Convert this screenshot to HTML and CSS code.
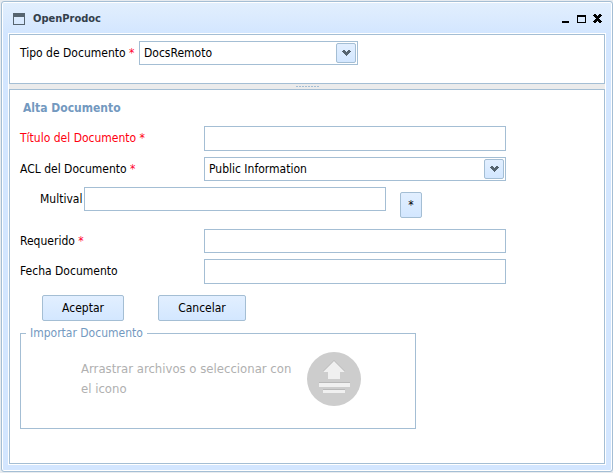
FILE: index.html
```html
<!DOCTYPE html>
<html lang="es">
<head>
<meta charset="utf-8">
<title>OpenProdoc</title>
<link rel="stylesheet" href="styles.css">
</head>
<body>
<main class="window">
  <header class="titlebar">
    <svg class="app-icon" width="12" height="12" viewBox="0 0 12 12" aria-hidden="true"><path fill="#56646f" fill-rule="evenodd" d="M0 0h12v12H0zM1 4v7h10V4z"/></svg>
    <h1 class="title">OpenProdoc</h1>
    <button class="tool" aria-label="Minimizar"><svg width="9" height="9" viewBox="0 0 9 9"><path d="M1 7h7v2H1z"/></svg></button>
    <button class="tool" aria-label="Maximizar"><svg width="9" height="9" viewBox="0 0 9 9"><path fill-rule="evenodd" d="M0 1h9v8H0zM1 3v5h7V3z"/></svg></button>
    <button class="tool" aria-label="Cerrar"><svg width="9" height="9" viewBox="0 0 9 9" shape-rendering="crispEdges"><path d="M1 0h2v1h1v1h1V1h1V0h2v1h1v1H8v1H7v1H6v1h1v1h1v1h1v1H8v1H6V8H5V7H4v1H3v1H1V8H0V7h1V6h1V5h1V4H2V3H1V2H0V1h1z"/></svg></button>
  </header>
  <div class="content">
    <section class="panel type-panel">
      <div class="type-row">
        <label for="type">Tipo de Documento <span class="required">*</span></label>
        <span class="combo">
          <select id="type" class="field"><option>DocsRemoto</option></select>
          <span class="combo-arrow"><svg width="9" height="6" viewBox="0 0 9 6" shape-rendering="crispEdges"><path fill="#56646f" d="M1 0h2v1h1v1h1V1h1V0h2v1h1v1H8v1H7v1H6v1H5v1H4V5H3V4H2V3H1V2H0V1h1z"/></svg></span>
        </span>
      </div>
    </section>
    <div class="splitter"><span class="grip"></span></div>
    <section class="panel form-panel">
      <h2 class="heading">Alta Documento</h2>
      <form class="form">
        <div class="row invalid">
          <label for="name">Título del Documento <span class="required">*</span></label>
          <input id="name" class="field tall" type="text">
        </div>
        <div class="row">
          <label for="acl">ACL del Documento <span class="required">*</span></label>
          <span class="combo">
            <select id="acl" class="field"><option>Public Information</option></select>
            <span class="combo-arrow"><svg width="9" height="6" viewBox="0 0 9 6" shape-rendering="crispEdges"><path fill="#56646f" d="M1 0h2v1h1v1h1V1h1V0h2v1h1v1H8v1H7v1H6v1H5v1H4V5H3V4H2V3H1V2H0V1h1z"/></svg></span>
          </span>
        </div>
        <div class="row multi">
          <label for="multival">Multival</label>
          <input id="multival" class="field" type="text">
          <button class="button star" type="button">*</button>
        </div>
        <div class="row">
          <label for="req">Requerido <span class="required">*</span></label>
          <input id="req" class="field" type="text">
        </div>
        <div class="row">
          <label for="date">Fecha Documento</label>
          <input id="date" class="field tall" type="text">
        </div>
        <div class="actions">
          <button class="button" type="button">Aceptar</button>
          <button class="button cancel" type="button">Cancelar</button>
        </div>
        <fieldset class="import">
          <legend>Importar Documento</legend>
          <div class="drop">
            <p class="hint">Arrastrar archivos o seleccionar con el icono</p>
            <svg width="54" height="54" viewBox="0 0 54 54" role="img" aria-label="Subir archivo">
              <circle cx="27" cy="27" r="27" fill="#cdcdcd"/>
              <path fill="#b8b8b8" d="M27 8l11 11v1H16v-1zM12 30h31v1H12zM16 37h22v1H16z"/>
              <path fill="#f0f0f0" d="M27 9l11 11h-5v7H21v-7h-5zM12 31h31v4H12zM16 38h22v3H16z"/>
            </svg>
          </div>
        </fieldset>
      </form>
    </section>
  </div>
</main>
</body>
</html>
```
FILE: styles.css
```css
* {
  box-sizing: border-box;
}

body {
  margin: 0;
  padding: 1px 0 1px 1px;
  height: 100vh;
  background: #e7ebef;
  color: #000;
  font: 12px/16px "DejaVu Sans Condensed", Tahoma, sans-serif;
}

.window {
  display: flex;
  flex-direction: column;
  height: 100%;
  padding: 0 6px 6px;
  border: 1px solid #a4bed4;
  border-radius: 3px;
  background: linear-gradient(#e2effd, #d3e6ff 32px);
  box-shadow: inset 0 0 0 1px #fff;
}

.titlebar {
  display: flex;
  align-items: center;
  flex: none;
  height: 31px;
  padding: 2px 4px 0 5px;
}

.app-icon {
  margin-right: 8px;
}

.title {
  flex: 1;
  margin: 0;
  color: #34404b;
  font-size: 11px;
  font-weight: bold;
}

.tool {
  display: flex;
  margin-left: 7px;
  padding: 0;
  border: 0;
  background: none;
}

.content {
  display: flex;
  flex: 1;
  flex-direction: column;
  padding: 1px;
  background: #fff;
}

.panel {
  border: 1px solid #a4bed4;
  background: #fff;
}

.type-panel {
  height: 50px;
  padding: 6px 10px;
}

.type-row {
  display: flex;
}

.type-row label {
  width: 119px;
}

label {
  flex: none;
  padding-top: 4px;
  white-space: nowrap;
}

.required {
  color: #ff0030;
}

.invalid,
.invalid .required {
  color: #ff0010;
}

.combo {
  position: relative;
  width: 219px;
}

.field {
  display: block;
  width: 100%;
  height: 24px;
  margin: 0;
  padding: 0 4px;
  appearance: none;
  border: 1px solid #a4bed4;
  border-radius: 0;
  background: #fff;
  color: #000;
  font: inherit;
}

.tall {
  height: 25px;
}

.combo-arrow {
  position: absolute;
  top: 2px;
  right: 2px;
  display: flex;
  align-items: center;
  justify-content: center;
  width: 20px;
  height: 20px;
  border: 1px solid #a4bed4;
  border-radius: 2px;
  background: linear-gradient(#e2efff, #d3e7ff);
  pointer-events: none;
}

.splitter {
  display: flex;
  align-items: center;
  justify-content: center;
  height: 5px;
  background: #ebebeb;
}

.grip {
  width: 23px;
  height: 1px;
  background: repeating-linear-gradient(90deg, #a4bed4 0 2px, transparent 2px 3px);
}

.form-panel {
  flex: 1;
  padding: 10px;
}

.heading {
  margin: 0 0 10px 3px;
  color: #7399bf;
  font-size: 12px;
  line-height: 16px;
}

.form {
  display: flex;
  flex-direction: column;
  gap: 6px;
}

.row {
  display: flex;
}

.row label {
  width: 184px;
}

.row .field,
.row .combo {
  width: 302px;
}

.multi {
  height: 36px;
  padding-left: 20px;
}

.multi label {
  width: 44px;
}

.button {
  width: 82px;
  height: 26px;
  padding: 0;
  border: 1px solid #a4bed4;
  border-radius: 2px;
  background: linear-gradient(#e2efff, #d3e7ff);
  color: #000;
  font: inherit;
}

.star {
  width: 22px;
  margin: 5px 0 0 14px;
}

.actions {
  display: flex;
  gap: 34px;
  padding: 5px 0 0 22px;
}

.cancel {
  width: 88px;
}

.import {
  width: 396px;
  height: 102px;
  margin: 0;
  padding: 0 0 0 5px;
  border: 1px solid #a4bed4;
}

.import legend {
  padding: 0 4px;
  color: #7399bf;
  line-height: 12px;
}

.drop {
  display: flex;
  align-items: center;
  gap: 10px;
  padding: 13px 0 0 55px;
}

.hint {
  width: 216px;
  margin: 0;
  color: #b0b0b0;
  font-size: 13px;
  line-height: 20px;
}
```
